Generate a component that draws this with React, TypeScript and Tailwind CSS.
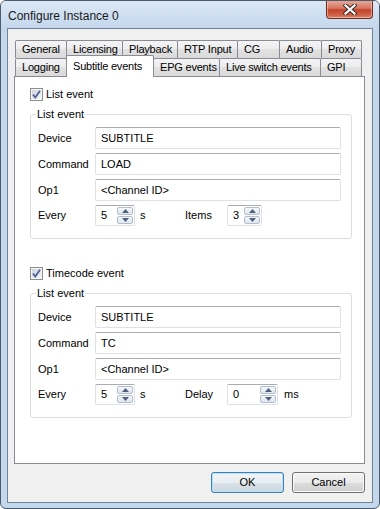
import clsx from "clsx";

const row1 = [
  { label: "General", w: "w-[52px]" },
  { label: "Licensing", w: "w-[57px]" },
  { label: "Playback", w: "w-[56px]" },
  { label: "RTP Input", w: "w-[61px]" },
  { label: "CG", w: "w-[43px]" },
  { label: "Audio", w: "w-[43px]" },
  { label: "Proxy", w: "w-[41px]" },
];

const row2 = [
  { label: "Logging", w: "w-[52px]" },
  { label: "Subtitle events", w: "w-[88px]", selected: true },
  { label: "EPG events", w: "w-[67px]" },
  { label: "Live switch events", w: "w-[102px]" },
  { label: "GPI", w: "w-[42px]" },
];

function Tab({ label, w, selected, first }: { label: string; w: string; selected?: boolean; first?: boolean }) {
  return (
    <div
      className={clsx(
        "flex items-center pl-[6px] tracking-[-0.2px] border-t border-l border-r border-[#898c95] rounded-t-[2px] whitespace-nowrap overflow-hidden",
        w,
        !first && "-ml-[1px]",
        selected
          ? "h-[22px] -mb-[1px] bg-white relative z-10 pb-[1px]"
          : "h-[18px] bg-[linear-gradient(#f4f4f4,#ececec_50%,#e2e2e2_50%,#dadada)]"
      )}
    >
      {label}
    </div>
  );
}

function Checkbox({ label }: { label: string }) {
  return (
    <div className="flex items-center gap-[3px] h-[13px]">
      <svg width="13" height="13" viewBox="0 0 13 13">
        <defs>
          <linearGradient id="cbg" x1="0" y1="0" x2="1" y2="1">
            <stop offset="0" stopColor="#d0d4da" />
            <stop offset="1" stopColor="#f6f6f6" />
          </linearGradient>
        </defs>
        <rect x="0.5" y="0.5" width="12" height="12" fill="#f4f4f4" stroke="#8e8f8f" />
        <rect x="2" y="2" width="9" height="9" fill="url(#cbg)" />
        <path d="M3 6.5 L5.3 9.5 L10 2.8" fill="none" stroke="#4a5f97" strokeWidth="1.8" />
      </svg>
      <span>{label}</span>
    </div>
  );
}

function TextBox({ value }: { value: string }) {
  return (
    <div className="flex-1 h-[22px] flex items-center pl-[5px] bg-white border border-[#dde1e8] border-t-[#abadb3] rounded-[2px] whitespace-nowrap">
      {value}
    </div>
  );
}

function Arrow({ up }: { up?: boolean }) {
  return (
    <div className="flex-1 flex items-center justify-center border border-[#b5bfcc] rounded-[2px] bg-[linear-gradient(#f5f8fc,#dfe6ef)]">
      <svg width="7" height="4" viewBox="0 0 7 4">
        <path d={up ? "M0 4 L3.5 0 L7 4 Z" : "M0 0 L3.5 4 L7 0 Z"} fill="#4c607e" />
      </svg>
    </div>
  );
}

function Spinner({ value, w }: { value: string; w: string }) {
  return (
    <div className={clsx("h-[21px] flex bg-white border border-[#dde1e8] border-t-[#abadb3] rounded-[2px]", w)}>
      <div className="flex-1 flex items-center pl-[5px]">{value}</div>
      <div className="w-[17px] flex flex-col gap-[1px] py-[1px] pr-[1px]">
        <Arrow up />
        <Arrow />
      </div>
    </div>
  );
}

function Field({ label, value }: { label: string; value: string }) {
  return (
    <div className="flex items-center">
      <span className="w-[57px]">{label}</span>
      <TextBox value={value} />
    </div>
  );
}

function EventGroup({
  op,
  secondLabel,
  secondValue,
  secondW,
  unit,
}: {
  op: string;
  secondLabel: string;
  secondValue: string;
  secondW: string;
  unit?: string;
}) {
  return (
    <div className="relative border border-[#d5dfe5] rounded-[3px] pt-[12px] pb-[12px] pl-[7px] pr-[10px] flex flex-col gap-[4px]">
      <span className="absolute left-[5px] -top-[8px] px-[1px] bg-white leading-[14px]">List event</span>
      <Field label="Device" value="SUBTITLE" />
      <Field label="Command" value={op} />
      <Field label="Op1" value="<Channel ID>" />
      <div className="flex items-center">
        <span className="w-[57px]">Every</span>
        <Spinner value="5" w="w-[40px]" />
        <span className="w-[50px] pl-[5px]">s</span>
        <span className="w-[42px]">{secondLabel}</span>
        <Spinner value={secondValue} w={secondW} />
        {unit && <span className="pl-[6px]">{unit}</span>}
      </div>
    </div>
  );
}

function Button({ label, primary }: { label: string; primary?: boolean }) {
  return (
    <div
      className={clsx(
        "w-[73px] h-[21px] flex items-center justify-center rounded-[3px] border",
        primary
          ? "border-[#3c7fb1] shadow-[inset_0_0_0_1px_#b4e3f9] bg-[linear-gradient(#f1f5f8,#e9eef2_50%,#dae2e8_50%,#ccd6de)]"
          : "border-[#707070] shadow-[inset_0_0_0_1px_#fbfbfb] bg-[linear-gradient(#f2f2f2,#ebebeb_50%,#dddddd_50%,#cfcfcf)]"
      )}
    >
      {label}
    </div>
  );
}

export default function App() {
  return (
    <div className="w-[380px] h-[509px] flex flex-col rounded-[6px] border border-[#4b5b6c] bg-[#c3d7ed] text-[11px] leading-[13px] text-black font-['Liberation_Sans',Arial,sans-serif] overflow-hidden">
      {/* Title bar */}
      <div className="h-[27px] flex justify-between bg-[linear-gradient(#dce8f5,#c3d7ed)]">
        <div className="pl-[7px] pt-[8px] text-[12px] leading-[14px] text-[#1a1a1a]">Configure Instance 0</div>
        <div className="self-start -mt-[1px] mr-[6px] w-[47px] h-[19px] flex items-center justify-center rounded-b-[4px] border border-t-0 border-[#6f2b20] bg-[linear-gradient(#e8ab9f,#d77863_45%,#c3432c_55%,#cf6248_85%,#de8d6f)] shadow-[inset_0_0_0_1px_rgba(255,220,210,0.5)]">
          <svg width="14" height="11" viewBox="0 0 14 11">
            <path d="M2.5 1.5 L11.5 9.5 M11.5 1.5 L2.5 9.5" stroke="#3b2e2c" strokeWidth="4.2" strokeLinecap="square" />
            <path d="M2.5 1.5 L11.5 9.5 M11.5 1.5 L2.5 9.5" stroke="#ffffff" strokeWidth="2.2" strokeLinecap="square" />
          </svg>
        </div>
      </div>

      {/* Client area */}
      <div className="mx-[6px] h-[475px] border border-[#72839a] bg-[#f0f0f0] flex flex-col">
        <div className="ml-[6px] mt-[11px] w-[351px]">
          <div className="flex h-[18px] pl-[1px]">
            {row1.map((t, i) => (
              <Tab key={t.label} label={t.label} w={t.w} first={i === 0} />
            ))}
          </div>
          <div className="flex h-[18px] pl-[1px] items-end">
            {row2.map((t, i) => (
              <Tab key={t.label} label={t.label} w={t.w} selected={t.selected} first={i === 0} />
            ))}
          </div>
          <div className="h-[388px] border border-[#898c95] bg-white pt-[11px] pl-[15px] pr-[12px]">
            <Checkbox label="List event" />
            <div className="mt-[13px]">
              <EventGroup op="LOAD" secondLabel="Items" secondValue="3" secondW="w-[35px]" />
            </div>
            <div className="mt-[28px]">
              <Checkbox label="Timecode event" />
            </div>
            <div className="mt-[13px]">
              <EventGroup op="TC" secondLabel="Delay" secondValue="0" secondW="w-[51px]" unit="ms" />
            </div>
          </div>
        </div>
        <div className="mt-[8px] ml-[203px] flex gap-[8px]">
          <Button label="OK" primary />
          <Button label="Cancel" />
        </div>
      </div>
    </div>
  );
}
